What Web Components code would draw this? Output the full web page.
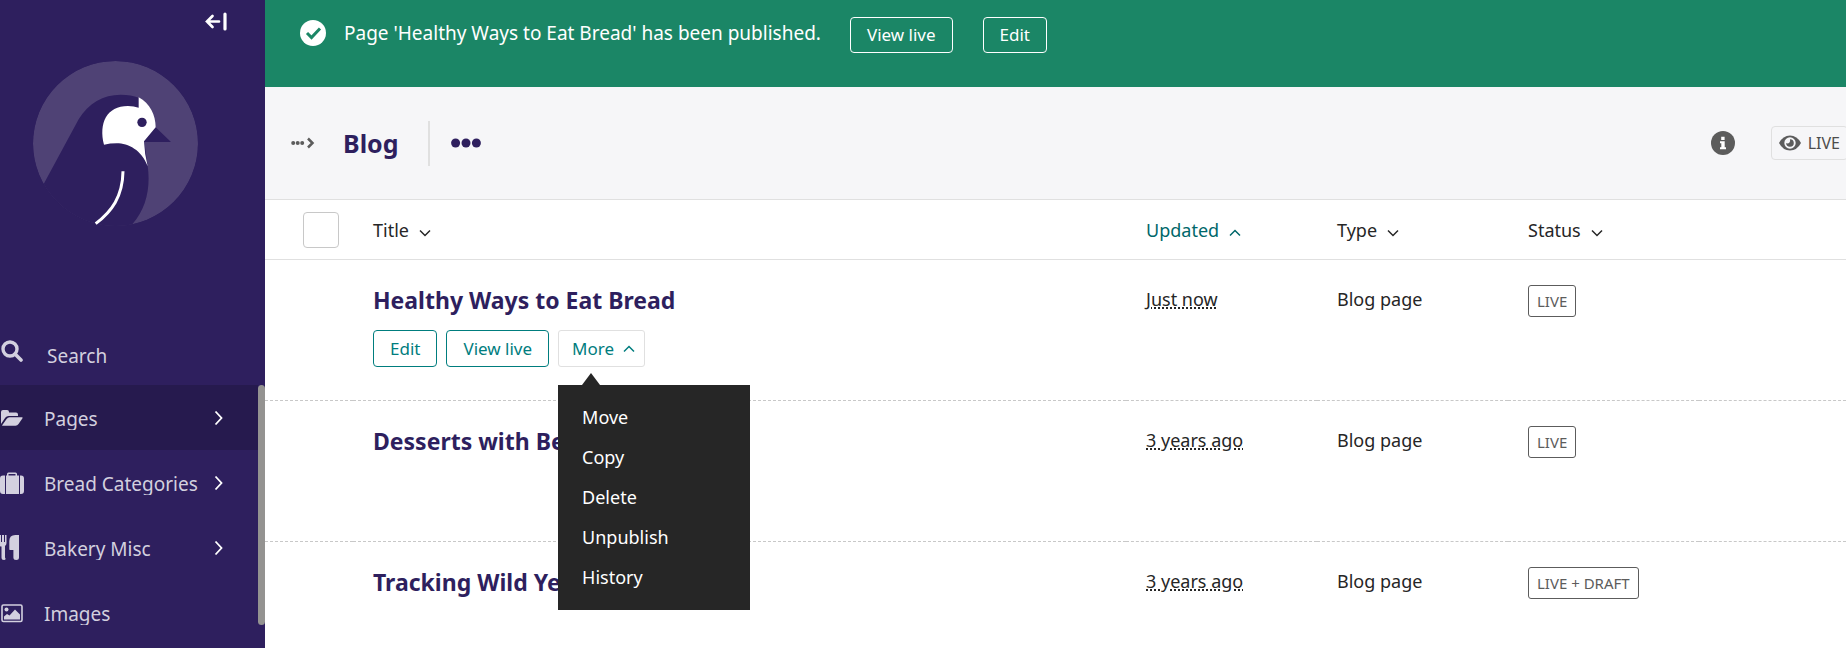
<!DOCTYPE html>
<html lang="en">
<head>
<meta charset="utf-8">
<meta name="viewport" content="width=device-width, initial-scale=1">
<title>Blog - Page explorer</title>
<style>
  html, body { height: 100%; }
  body { margin: 0; overflow: hidden; background: #fff; color: #262626; font: 400 18px/24px "Noto Sans", "Open Sans", sans-serif; }
</style>
</head>
<body>
<admin-shell>
  <admin-sidebar slot="sidebar">
    <nav-item icon="folder" active arrow>Pages</nav-item>
    <nav-item icon="case" arrow>Bread Categories</nav-item>
    <nav-item icon="cutlery" arrow>Bakery Misc</nav-item>
    <nav-item icon="image">Images</nav-item>
  </admin-sidebar>
  <success-message>
    Page 'Healthy Ways to Eat Bread' has been published.
    <link-button slot="actions" kind="light">View live</link-button>
    <link-button slot="actions" kind="light">Edit</link-button>
  </success-message>
  <explorer-header>Blog</explorer-header>
  <page-listing></page-listing>
</admin-shell>

<script>
const ICONS = {
  search: '<svg viewBox="0 0 22 22" width="22" height="22"><circle cx="9" cy="9" r="7" fill="none" stroke="currentColor" stroke-width="3.4"/><path d="M14 14l6 6" stroke="currentColor" stroke-width="3.6" stroke-linecap="round"/></svg>',
  folder: '<svg viewBox="0 0 22 22" width="22" height="22" fill="currentColor"><path d="M0 17V5q0-2 2-2h4q2 0 2 2v.6h7q2 0 2 2V9H7.500Q5.500 9 4.200 10.700z"/><path d="M1 18.600l4.600-6.600q1.200-1.700 3-1.700H21q1 0 .5 1L17.500 17q-1.100 1.700-3 1.700H1.500q-.5 0-.5-.1z"/></svg>',
  case: '<svg viewBox="0 0 24 22" width="24" height="22" fill="currentColor"><path d="M3 3.500h2V22H3Q0 22 0 19V6.500q0-3 3-3zM20 3.500h1q3 0 3 3V19q0 3-3 3h-1zM6 3.500h1V2q0-1.500 1.500-1.500h7Q17 .5 17 2v1.500h2V22H6zM8.500 2v1.500h7V2z" fill-rule="evenodd"/></svg>',
  cutlery: '<svg viewBox="0 0 20 25" width="20" height="25" fill="currentColor"><path d="M-3 0h1.500v7h1V0H1v7h1V0h2v7h1V0h1.500v8q0 2-1.500 3v11.500Q6.500 25 4 25t-2.500-2.500V11.500Q-3 11-3 8zM19 0v22.500Q19 25 16.200 25t-2.800-2.500V15H10q-.7 0-.7-.7V6q0-6 6-6z"/></svg>',
  image: '<svg viewBox="0 0 22 22" width="22" height="22"><rect x="1" y="3" width="20" height="16.500" rx="1.500" fill="none" stroke="currentColor" stroke-width="1.600"/><circle cx="5.500" cy="7.500" r="2" fill="currentColor"/><path d="M3 17.500v-3l3-2.500 2.500 1.500L14 7.500l5 5v5z" fill="currentColor"/></svg>',
  right: '<svg viewBox="0 0 10 16" width="10" height="16"><path d="M1.500 1.500L7.500 8l-6 6.500" fill="none" stroke="currentColor" stroke-width="1.800"/></svg>',
  down: '<svg viewBox="0 0 12 8" width="12" height="8"><path d="M1 1.500l5 5 5-5" fill="none" stroke="currentColor" stroke-width="1.500"/></svg>',
  up: '<svg viewBox="0 0 12 8" width="12" height="8"><path d="M1 6.500l5-5 5 5" fill="none" stroke="currentColor" stroke-width="1.500"/></svg>',
  check: '<svg viewBox="0 0 26 26" width="26" height="26"><circle cx="13" cy="13" r="13" fill="#fff"/><path d="M7 13l4.500 4.500 8.500-9" fill="none" stroke="#1b8666" stroke-width="3"/></svg>',
  trail: '<svg viewBox="0 0 24 12" width="24" height="12"><g fill="#5c5c5c"><circle cx="2.200" cy="6" r="2"/><circle cx="6.700" cy="6" r="2"/><circle cx="11.200" cy="6" r="2"/></g><path d="M17 1.500L21.500 6 17 10.500" fill="none" stroke="#5c5c5c" stroke-width="2.500"/></svg>',
  dots: '<svg viewBox="0 0 30 10" width="30" height="10" fill="#2e1f5e"><circle cx="4.600" cy="5" r="4.500"/><circle cx="15" cy="5" r="4.500"/><circle cx="25.400" cy="5" r="4.500"/></svg>',
  info: '<svg viewBox="0 0 24 24" width="24" height="24"><circle cx="12" cy="12" r="12" fill="#5c5c5c"/><path d="M10.200 5.800h3.400V9h-3.400zM9 10.300h4.700v6h1.300V18.300H9v-2h1.300v-4H9z" fill="#fff"/></svg>',
  eye: '<svg viewBox="0 0 22 16" width="22" height="16"><path d="M0 8Q4 .5 11 .5T22 8q-4 7.500-11 7.500T0 8z" fill="#5c5c5c"/><circle cx="11" cy="8" r="5.700" fill="#f6f6f8"/><path d="M11 4.200A3.800 3.800 0 1 1 7.200 8Q9 9 10.300 7.700T11 4.200z" fill="#5c5c5c"/></svg>',
  collapse: '<svg viewBox="0 0 24 20" width="24" height="20" fill="none" stroke="#fff" stroke-linecap="round"><path d="M14 9.500H2M7.500 4L2 9.500l5.500 5.500" stroke-width="2.700"/><path d="M20 2v15" stroke-width="3.200"/></svg>',
  bird: '<svg viewBox="99 183 495 495" width="165" height="165"><clipPath id="disc"><circle cx="346.500" cy="430.500" r="247.500"/></clipPath><g clip-path="url(#disc)"><circle cx="346.500" cy="430.500" r="247.500" fill="#4f4275"/><path d="M80 640L131 552 236 358C265 309 310 284 362 284Q394 284 416 293L467 382 513 426H433L443 497C452 560 440 625 397 673L380 700H100z" fill="#2e1f5e"/></g><path d="M312 434C296 370 320 318 384 318Q402 318 416 323V292C450 310 467 345 467 382L432 424Q434 465 443 499C425 450 385 430 350 430Q330 430 312 434z" fill="#fff"/><circle cx="426" cy="367" r="14" fill="#2e1f5e"/><path d="M369 514C368 590 335 635 287 671" fill="none" stroke="#fff" stroke-width="9"/></svg>'
};

function define(name, render) {
  customElements.define(name, class extends HTMLElement {
    constructor() {
      super();
      this.attachShadow({ mode: 'open' });
    }
    connectedCallback() {
      this.shadowRoot.innerHTML = '<style>*,:host{box-sizing:border-box}svg{display:block;flex:none}</style>' + render(this);
    }
  });
}

define('admin-shell', () => `
  <style>
    :host { display: grid; grid-template-columns: 265px minmax(0, 1fr); height: 100vh; overflow: hidden; }
    main { min-width: 0; }
  </style>
  <slot name="sidebar"></slot>
  <main><slot></slot></main>`);

define('admin-sidebar', () => `
  <style>
    :host { display: flex; flex-direction: column; background: #2e1f5e; color: #d3d0df; font-size: 19px; overflow: hidden; }
    button { font: inherit; color: inherit; border: 0; padding: 0; background: none; text-align: left; }
    .collapse { align-self: flex-end; margin: 12px 36px 0 0; }
    .logo { display: block; margin: 29px 33px 0; width: 165px; }
    .search { display: flex; gap: 24px; margin-top: 114px; height: 45px; padding-left: 1px; }
    .search span { line-height: 22px; padding-top: 5px; }
    .menu { display: flex; flex: 1; min-height: 0; }
    nav { flex: 1; min-width: 0; }
    .thumb { width: 7px; height: 240px; border-radius: 4px; background: #949391; }
  </style>
  <button class="collapse" aria-label="Collapse sidebar">${ICONS.collapse}</button>
  <a class="logo" href="#" aria-label="Dashboard">${ICONS.bird}</a>
  <button class="search">${ICONS.search}<span>Search</span></button>
  <div class="menu"><nav><slot></slot></nav><div class="thumb"></div></div>`);

define('nav-item', el => `
  <style>
    :host { display: block; }
    :host([active]) { background: #261a4e; }
    a { display: grid; grid-template-columns: 44px 1fr auto; align-items: center; height: 65px; padding-right: 34px; color: inherit; text-decoration: none; }
    .icon { padding-left: ${/folder|image/.test(el.getAttribute('icon')) ? 1 : 0}px; }
    .label { line-height: 22px; overflow: hidden; white-space: nowrap; margin-top: 2px; }
    .arrow { color: #fff; }
  </style>
  <a href="#"><span class="icon">${ICONS[el.getAttribute('icon')]}</span><span class="label"><slot></slot></span>${el.hasAttribute('arrow') ? `<span class="arrow">${ICONS.right}</span>` : ''}</a>`);

define('link-button', el => `
  <style>
    :host { display: block; }
    a { display: block; padding: 0 16px; border: 1px solid #007d7e; border-radius: 4px; color: #007d7e; line-height: 35px; font-size: 17px; text-decoration: none; white-space: nowrap; }
    a.light { border-color: #fff; color: #fff; line-height: 34px; }
  </style>
  <a href="#" class="${el.getAttribute('kind') || ''}"><slot></slot></a>`);

define('success-message', () => `
  <style>
    :host { display: flex; height: 87px; padding: 17px 35px 0; background: #1b8666; color: #fff; font-size: 19px; }
    .icon { padding-top: 3px; }
    p { margin: 0 29px 0 18px; line-height: 32px; white-space: nowrap; }
    .actions { display: flex; align-items: flex-start; gap: 30px; }
  </style>
  <span class="icon">${ICONS.check}</span>
  <p><slot></slot></p>
  <div class="actions"><slot name="actions"></slot></div>`);

define('explorer-header', () => `
  <style>
    :host { display: flex; align-items: center; height: 113px; padding-left: 26px; background: #f6f6f8; border-bottom: 1px solid #e0e0e0; overflow: hidden; }
    button { border: 0; padding: 0; background: none; }
    h1 { margin: 0 0 0 28px; color: #2e1f5e; font-size: 25px; line-height: 32px; font-weight: 700; }
    .actions { margin-left: 29px; padding-left: 21px; height: 45px; border-left: 2px solid #e0e0e0; }
    .info { margin: 0 36px 0 auto; }
    .live { display: flex; align-items: center; gap: 7px; height: 34px; padding: 0 7px; margin-right: -2px; border: 1px solid #e0e0e0; border-radius: 4px; color: #4d4d4d; font-size: 16px; text-decoration: none; }
  </style>
  <button aria-label="Show breadcrumbs">${ICONS.trail}</button>
  <h1><slot></slot></h1>
  <button class="actions" aria-label="Actions">${ICONS.dots}</button>
  <button class="info" aria-label="Status">${ICONS.info}</button>
  <a class="live" href="#">${ICONS.eye}LIVE</a>`);

define('more-menu', () => `
  <style>
    :host { display: block; position: relative; }
    button { display: flex; align-items: center; gap: 9px; padding: 0 9px 0 13px; border: 1px solid #e0e0e0; border-radius: 3px; background: #fff; color: #007d7e; font: inherit; font-size: 17px; line-height: 35px; }
    .menu { position: absolute; z-index: 2; top: 55px; left: 0; width: 192px; padding: 12px 0 13px; background: #262626; }
    .menu::before { content: ""; position: absolute; left: 24px; bottom: 100%; border: solid transparent; border-width: 0 9px 12px; border-bottom-color: #262626; }
    a { display: block; padding: 0 24px; color: #fff; line-height: 40px; text-decoration: none; }
  </style>
  <button aria-expanded="true">More ${ICONS.up}</button>
  <div class="menu"><a href="#">Move</a><a href="#">Copy</a><a href="#">Delete</a><a href="#">Unpublish</a><a href="#">History</a></div>`);

define('status-tag', () => `
  <style>
    :host { display: inline-block; vertical-align: top; }
    a { display: block; padding: 0 8px; border: 1px solid #5c5c5c; border-radius: 3px; color: #5c5c5c; font-size: 15px; line-height: 30px; text-decoration: none; white-space: nowrap; }
  </style>
  <a href="#"><slot></slot></a>`);

define('page-listing', () => {
  const head = (text, dir, cls = '') => `<th scope="col"><a class="sort ${cls}" href="#">${text} ${ICONS[dir]}</a></th>`;
  const row = (title, date, status, extra = '') => `
    <tr><td></td><td><h2><a href="#">${title}</a></h2>${extra}</td>
    <td><abbr title="${date}">${date}</abbr></td><td>Blog page</td>
    <td class="status"><status-tag>${status}</status-tag></td><td></td></tr>`;
  return `
  <style>
    :host { display: block; }
    table { width: 100%; table-layout: fixed; border-collapse: separate; border-spacing: 0; }
    .check { width: 88px; } .meta { width: 191px; } .last { width: 147px; }
    th { height: 60px; padding: 0 0 0 20px; border-bottom: 1px solid #e0e0e0; font-weight: 400; text-align: left; }
    th:first-child { padding-left: 38px; }
    input { display: block; appearance: none; width: 36px; height: 36px; margin: 0; border: 1px solid #c8c8c8; border-radius: 4px; background: #fff; }
    .sort { display: flex; align-items: center; gap: 10px; color: inherit; text-decoration: none; }
    .sort svg { margin-top: 6px; }
    .sorted { color: #00676a; }
    td { height: 141px; padding: 27px 0 0 20px; border-bottom: 1px dashed #c8c8c8; vertical-align: top; white-space: nowrap; }
    .status { padding-top: 25px; }
    h2 { margin: 0; font-size: 23px; line-height: 26px; font-weight: 700; }
    h2 a { color: #2e1f5e; text-decoration: none; }
    abbr { text-decoration: underline dotted 2px; text-underline-offset: 1px; }
    .actions { display: flex; gap: 9px; margin-top: 17px; }
  </style>
  <table>
    <colgroup><col class="check"><col><col class="meta"><col class="meta"><col class="meta"><col class="last"></colgroup>
    <thead><tr><th scope="col"><input type="checkbox" aria-label="Select all"></th>
      ${head('Title', 'down')}${head('Updated', 'up', 'sorted')}${head('Type', 'down')}${head('Status', 'down')}<th></th></tr></thead>
    <tbody>
      ${row('Healthy Ways to Eat Bread', 'Just now', 'LIVE', '<div class="actions"><link-button>Edit</link-button><link-button>View live</link-button><more-menu></more-menu></div>')}
      ${row('Desserts with Benefits', '3 years ago', 'LIVE')}
      ${row('Tracking Wild Yeast', '3 years ago', 'LIVE + DRAFT')}
    </tbody>
  </table>`;
});
</script>
</body>
</html>
